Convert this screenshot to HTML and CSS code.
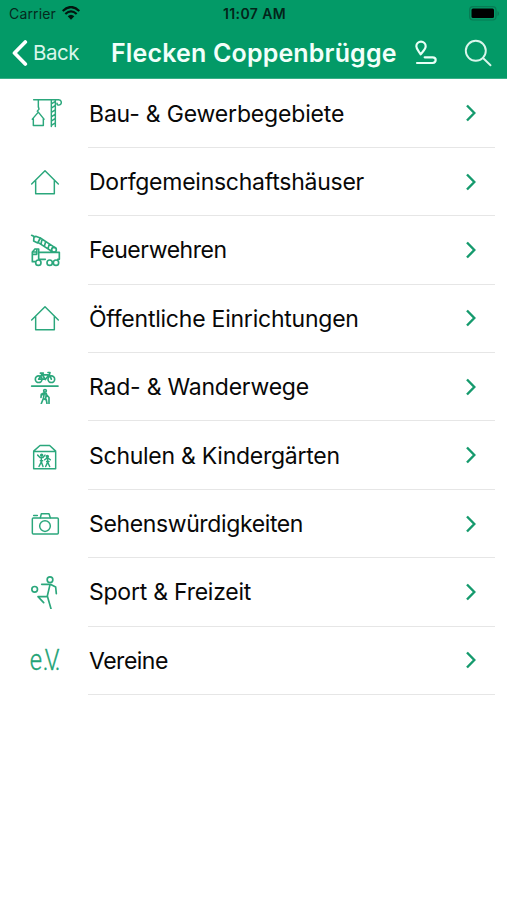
FILE: index.html
```html
<!DOCTYPE html>
<html lang="de">
<head>
<meta charset="utf-8">
<meta name="viewport" content="width=device-width, initial-scale=1">
<title>Flecken Coppenbrügge</title>
<link rel="stylesheet" href="styles.css">
</head>
<body>
<svg class="defs" aria-hidden="true">
  <symbol id="chevron" viewBox="0 0 12 20"><path d="M2 2.5 9.3 10 2 17.5"/></symbol>
</svg>
<header class="header">
  <div class="status">
    <div class="carrier"><span class="carrier-name">Carrier</span>
      <svg class="wifi" viewBox="0 0 54 42"><path d="M2 15Q27-9 52 15M10 24Q27 8 44 24"/><path class="solid" d="M17 31Q27 21 37 31L27 41Z"/></svg>
    </div>
    <span class="time">11:07 AM</span>
    <svg class="battery" viewBox="0 0 31 15"><rect class="shell" x=".6" y=".6" width="26.4" height="13.4" rx="3.5"/><rect class="charge" x="2.5" y="2.5" width="22.5" height="9.5" rx="1.5"/><path class="tip" d="M28.5 5v5Q30 9.500 30 7.500T28.500 5Z"/></svg>
  </div>
  <nav class="nav">
    <a class="back"><svg class="back-icon" viewBox="0 0 16 26"><path d="M13.300 2 2.500 13 13.300 24"/></svg><span class="back-label">Back</span></a>
    <h1 class="title">Flecken Coppenbrügge</h1>
    <svg class="route" viewBox="0 0 72 84"><path d="M23 46C18 38 10 31 10 22A14 14 0 0 1 38 22C38 31 29 38 23 46Z"/><path d="M35 55H59Q68 55 68 63T59 72H12"/></svg>
    <svg class="search" viewBox="0 0 28 28"><circle cx="11.800" cy="11.800" r="10"/><path d="M19 19 26.500 26.300"/></svg>
  </nav>
</header>
<main class="list">
  <a class="row">
    <svg class="icon" viewBox="24 18.6 102 102"><path d="M41 30H116Q124 31 124 38T117 46Q111 46 111 40M55 30V52M52 64 57 58 55 50M37 88 55 67 72 88M40 87V107H70V87M94 30V110M106 30V110M94 42 106 35M94 55 106 47M94 68 106 60M94 81 106 73M94 94 106 86M94 107 106 99"/></svg>
    <div class="cell"><span class="label l1">Bau- &amp; Gewerbegebiete</span><svg class="chevron"><use href="#chevron"/></svg></div>
  </a>
  <a class="row">
    <svg class="icon" viewBox="24 13.800 102 102"><path d="M35 71 75 31 115 71M47 61V100H103V61"/></svg>
    <div class="cell"><span class="label l2">Dorfgemeinschaftshäuser</span><svg class="chevron"><use href="#chevron"/></svg></div>
  </a>
  <a class="row">
    <svg class="icon bold" viewBox="24 24 102 102"><path d="M35 31 45 36M42 34 41 48 53 54 61 39 47 34M61 39 105 68M55 53 94 78M66 43 63 57M77 50 73 64M88 57 84 71M57 82H118V103H113M45 72H56V103H62M45 72 37 81V110H45M37 88H50V76M57 103H76M39 81H50"/><circle cx="102" cy="74" r="7"/><circle cx="55" cy="113" r="8"/><circle cx="89" cy="113" r="8"/><circle cx="108" cy="113" r="8"/></svg>
    <div class="cell"><span class="label l3">Feuerwehren</span><svg class="chevron"><use href="#chevron"/></svg></div>
  </a>
  <a class="row">
    <svg class="icon" viewBox="24 13.800 102 102"><path d="M35 71 75 31 115 71M47 61V100H103V61"/></svg>
    <div class="cell"><span class="label l4">Öffentliche Einrichtungen</span><svg class="chevron"><use href="#chevron"/></svg></div>
  </a>
  <a class="row">
    <svg class="icon bold" viewBox="24 23.400 102 102"><path d="M35 72H114"/><circle cx="56" cy="51" r="10"/><circle cx="94" cy="51" r="10"/><path d="M56 51 66 36 76 52 88 37 94 51M66 38H84M61 33H70M84 31H90L88 38M56 51H76"/><circle cx="75" cy="86" r="4"/><path d="M73 92 64 96 63 106M73 92 81 99 87 106V124M73 93 70 109 64 124M70 109 79 113 81 124M79 94 77 110M65 97 72 98"/></svg>
    <div class="cell"><span class="label l5">Rad- &amp; Wanderwege</span><svg class="chevron"><use href="#chevron"/></svg></div>
  </a>
  <a class="row">
    <svg class="icon" viewBox="24 18.600 102 102"><path d="M41 59V111H107V59ZM41 58 60 41H89L107 58M53 70 60 77H69L75 70M64 77V90L57 104M64 90 69 104M74 84 79 80H86L91 84M83 80V91L77 104M83 91 89 104M61 87H68M80 89H87"/><circle class="fill" cx="65" cy="70" r="3"/><circle class="fill" cx="82" cy="74" r="3"/></svg>
    <div class="cell"><span class="label l6">Schulen &amp; Kindergärten</span><svg class="chevron"><use href="#chevron"/></svg></div>
  </a>
  <a class="row">
    <svg class="icon" viewBox="24 19.800 102 102"><rect x="37" y="53" width="78" height="48" rx="3"/><path d="M61 52 64 40H87L91 52M41 45H52"/><circle cx="75" cy="77" r="16"/></svg>
    <div class="cell"><span class="label l7">Sehenswürdigkeiten</span><svg class="chevron"><use href="#chevron"/></svg></div>
  </a>
  <a class="row">
    <svg class="icon bold" viewBox="24 21 102 102"><circle cx="90" cy="35" r="8.500"/><circle cx="44" cy="64" r="8.500"/><path d="M65 49H91L107 57 109 77M90 50 82 84 93 122M81 86H54L71 104"/></svg>
    <div class="cell"><span class="label l8">Sport &amp; Freizeit</span><svg class="chevron"><use href="#chevron"/></svg></div>
  </a>
  <a class="row">
    <svg class="icon ev-icon" viewBox="24 22.200 102 102"><text class="ev" transform="scale(.82 1)" x="36 83 91 127" y="104">e.V.</text></svg>
    <div class="cell"><span class="label l9">Vereine</span><svg class="chevron"><use href="#chevron"/></svg></div>
  </a>
</main>
</body>
</html>
```
FILE: styles.css
```css
* { box-sizing: border-box; }
body { margin: 0; background: #fff; color: #080808; font-family: Inter, "Liberation Sans", sans-serif; }
svg { display: block; flex: none; fill: none; stroke-linecap: round; stroke-linejoin: round; }
.defs { display: none; }
.header { height: 79px; background: #039a67; border-bottom: 1px solid #39af87; }
.status { height: 27px; display: grid; grid-template-columns: 1fr auto 1fr; align-items: center; padding: 0 7px 0 9px; color: #05291d; }
.carrier { display: flex; align-items: center; gap: 6px; font-size: 14px; }
.carrier-name { letter-spacing: .15px; }
.wifi { width: 18px; height: 14px; margin-top: -2px; stroke: #03150f; stroke-width: 6.5; stroke-linecap: butt; }
.wifi .solid { fill: #03150f; stroke: none; }
.time { font-size: 14px; font-weight: 600; letter-spacing: .4px; color: #03251a; }
.battery { width: 31px; height: 15px; justify-self: end; }
.shell { stroke: #087b54; stroke-width: 1.2; }
.charge { fill: #000; }
.tip { fill: #087b54; }
.nav { height: 51px; display: flex; align-items: center; padding-left: 12px; color: #f2fffa; }
.back { display: flex; align-items: center; width: 99px; gap: 5px; }
.back-icon { width: 16px; height: 26px; stroke: #fff; stroke-width: 3.7; }
.back-label { font-size: 20.500px; letter-spacing: -.5px; color: #d9f6eb; }
.title { width: 301.500px; margin: 0; font-size: 25px; line-height: 30px; font-weight: 600; letter-spacing: .16px; white-space: nowrap; }
.route { width: 24px; height: 28px; stroke: #e8fff6; stroke-width: 6.5; }
.search { width: 28px; height: 28px; margin-left: 27.500px; stroke: #d9f6eb; stroke-width: 1.9; }
.list { padding-top: .5px; }
.row { display: flex; height: 68.400px; padding: 0 12px 0 28px; }
.icon { width: 34px; height: 34px; margin-top: 16.700px; stroke: #2ba77c; stroke-width: 4.4; }
.icon.bold { stroke-width: 5; }
.icon .fill { fill: #2ba77c; }
.ev-icon { overflow: visible; }
.cell { flex: 1; display: flex; align-items: center; justify-content: space-between; margin-left: 26px; padding: 0 18.500px 0 1px; border-bottom: 1px solid #e6e6e6; }
.label { padding-top: 1px; font-size: 23px; line-height: 30px; white-space: nowrap; }
.l1 { letter-spacing: -.17px; }
.l2 { letter-spacing: -.25px; }
.l3 { letter-spacing: -.45px; }
.l4 { letter-spacing: -.23px; }
.l5 { letter-spacing: -.22px; }
.l6 { letter-spacing: -.26px; }
.l7 { letter-spacing: -.37px; }
.l8 { letter-spacing: -.24px; }
.l9 { letter-spacing: -.5px; }
.chevron { width: 12px; height: 20px; stroke: #159a6d; stroke-width: 2.4; stroke-linecap: butt; stroke-linejoin: miter; }
.ev { font: 300 87px Roboto, sans-serif; fill: #22a376; stroke: #22a376; stroke-width: 1; }
```
